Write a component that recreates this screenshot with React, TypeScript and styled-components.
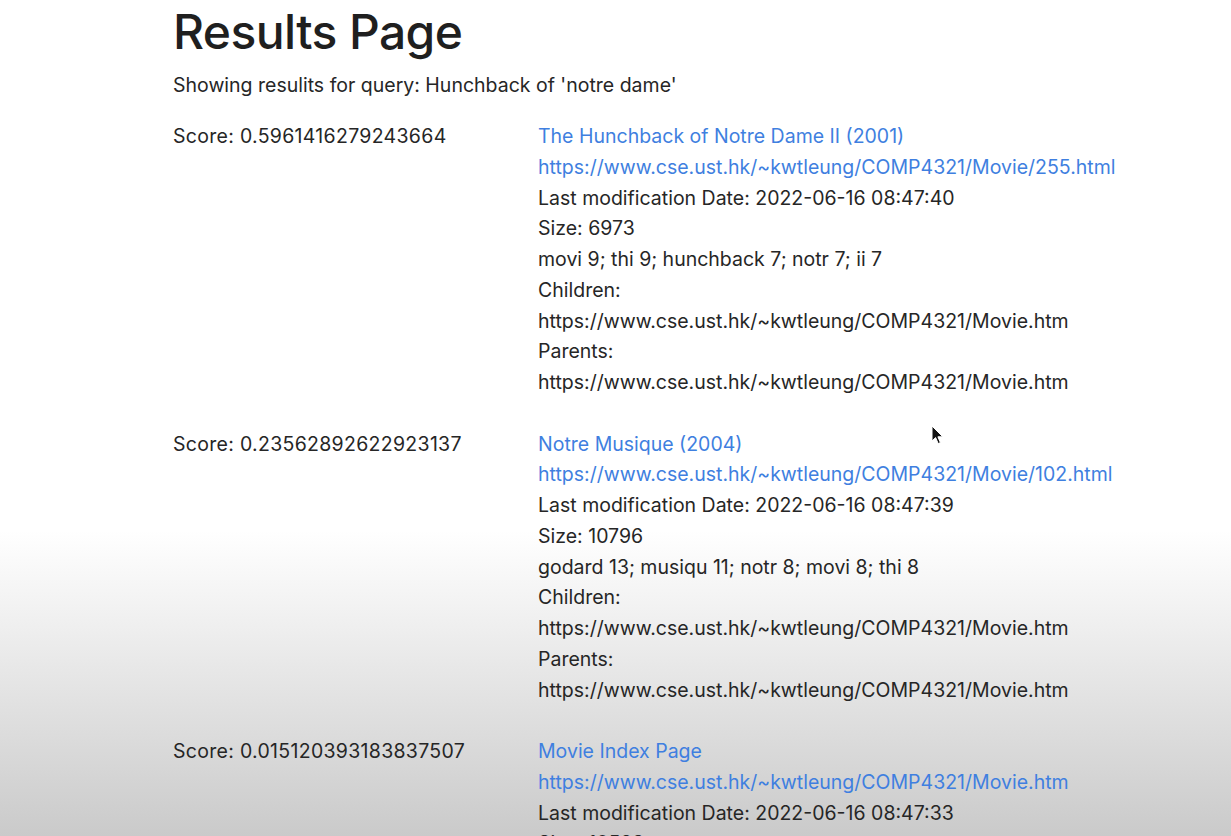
import React from 'react'
import styled, { createGlobalStyle } from 'styled-components'

interface Result {
  score: string
  title: string
  url: string
  modified: string
  size: string
  keywords: string
  children: string[]
  parents: string[]
}

const results: Result[] = [
  {
    score: '0.5961416279243664',
    title: 'The Hunchback of Notre Dame II (2001)',
    url: 'https://www.cse.ust.hk/~kwtleung/COMP4321/Movie/255.html',
    modified: '2022-06-16 08:47:40',
    size: '6973',
    keywords: 'movi 9; thi 9; hunchback 7; notr 7; ii 7',
    children: ['https://www.cse.ust.hk/~kwtleung/COMP4321/Movie.htm'],
    parents: ['https://www.cse.ust.hk/~kwtleung/COMP4321/Movie.htm'],
  },
  {
    score: '0.23562892622923137',
    title: 'Notre Musique (2004)',
    url: 'https://www.cse.ust.hk/~kwtleung/COMP4321/Movie/102.html',
    modified: '2022-06-16 08:47:39',
    size: '10796',
    keywords: 'godard 13; musiqu 11; notr 8; movi 8; thi 8',
    children: ['https://www.cse.ust.hk/~kwtleung/COMP4321/Movie.htm'],
    parents: ['https://www.cse.ust.hk/~kwtleung/COMP4321/Movie.htm'],
  },
  {
    score: '0.015120393183837507',
    title: 'Movie Index Page',
    url: 'https://www.cse.ust.hk/~kwtleung/COMP4321/Movie.htm',
    modified: '2022-06-16 08:47:33',
    size: '10583',
    keywords: 'movi 20; thi 12; page 6; index 5; list 4',
    children: ['https://www.cse.ust.hk/~kwtleung/COMP4321/Movie/1.html'],
    parents: [],
  },
]

const GlobalStyle = createGlobalStyle`
  html, body {
    margin: 0;
    padding: 0;
  }
  body {
    min-height: 836px;
    overflow: hidden;
    background: linear-gradient(to bottom, #ffffff 0, #ffffff 530px, #f0f0f0 620px, #cacaca 836px);
    font-family: Inter, "Liberation Sans", sans-serif;
    color: #222;
  }
`

const Page = styled.main`
  position: relative;
  height: 836px;
  padding: 1px 0 0 173px;
  box-sizing: border-box;
  overflow: hidden;
`

const Heading = styled.h1`
  margin: 0;
  padding-top: 2px;
  font-size: 48px;
  font-weight: 500;
  line-height: 58px;
  letter-spacing: -0.6px;
  color: #1f1f1f;
`

const Subtitle = styled.p`
  margin: 9px 0 20px;
  font-size: 19.5px;
  line-height: 31px;
  color: #262626;
`

const ResultRow = styled.section`
  display: grid;
  grid-template-columns: 365px 1fr;
  font-size: 19.5px;
  line-height: 30.75px;
  margin-bottom: 30.75px;
`

const Score = styled.div`
  color: #262626;
  letter-spacing: 0.3px;
`

const Details = styled.div`
  display: flex;
  flex-direction: column;
`

const Line = styled.span<{ $link?: boolean }>`
  color: ${props => (props.$link ? '#3f7fe0' : '#262626')};
  white-space: nowrap;
`

const Cursor = styled.svg`
  position: absolute;
  left: 931px;
  top: 425px;
`

const App: React.FC = () => {
  return (
    <>
      <GlobalStyle />
      <Page>
        <Heading>Results Page</Heading>
        <Subtitle>Showing resulits for query: Hunchback of 'notre dame'</Subtitle>
        {results.map(r => (
          <ResultRow key={r.score}>
            <Score>Score: {r.score}</Score>
            <Details>
              <Line $link>{r.title}</Line>
              <Line $link>{r.url}</Line>
              <Line>Last modification Date: {r.modified}</Line>
              <Line>Size: {r.size}</Line>
              <Line>{r.keywords}</Line>
              <Line>Children:</Line>
              {r.children.map(c => (
                <Line key={c}>{c}</Line>
              ))}
              <Line>Parents:</Line>
              {r.parents.map(p => (
                <Line key={p}>{p}</Line>
              ))}
            </Details>
          </ResultRow>
        ))}
        <Cursor width="13" height="20" viewBox="0 0 13 20">
          <path d="M1 1 L1 16 L4.6 12.6 L7.2 18.6 L9.4 17.6 L6.9 11.8 L11.8 11.8 Z" fill="#111" stroke="#fff" strokeWidth="1" />
        </Cursor>
      </Page>
    </>
  )
}

export default App
